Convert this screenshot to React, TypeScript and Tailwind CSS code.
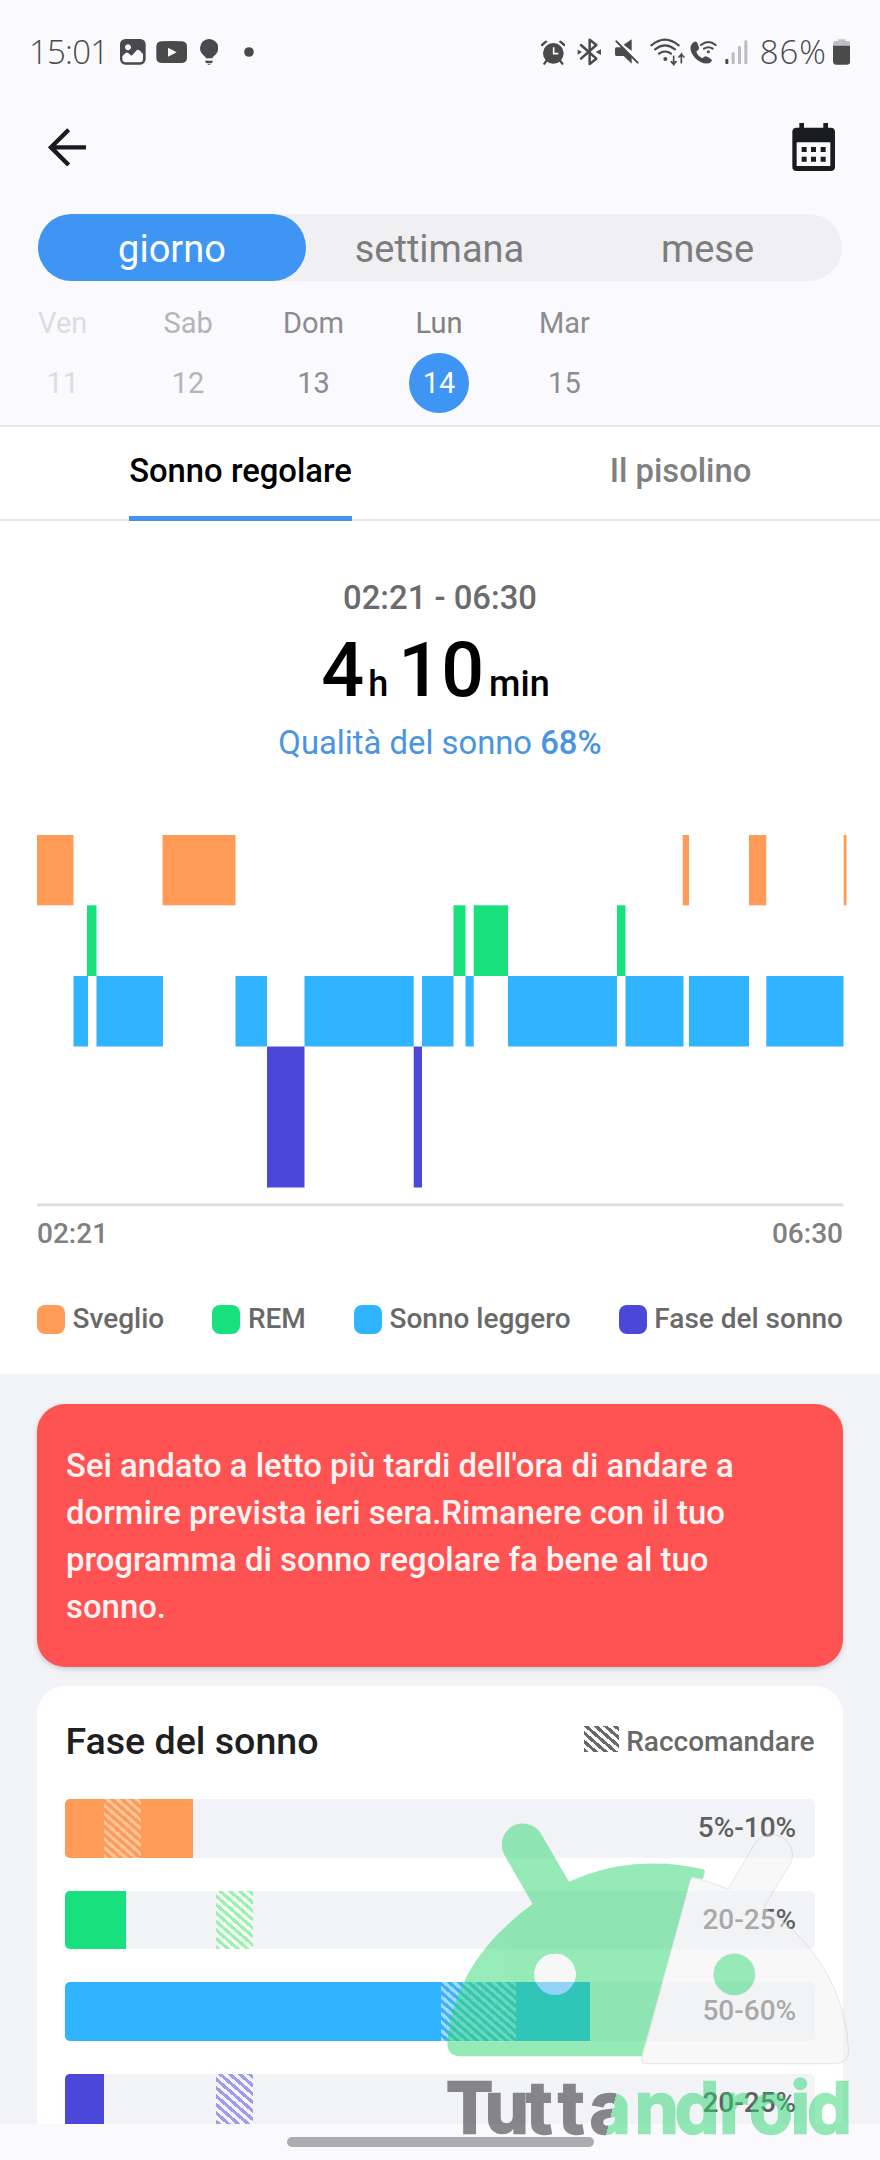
import type { ReactNode } from "react";

type Stage = "awake" | "rem" | "light" | "deep";

const STAGE_COLOR: Record<Stage, string> = {
  awake: "#ff9b57",
  rem: "#18e07c",
  light: "#31b4ff",
  deep: "#4b48d9",
};

const STAGE_ROW: Record<Stage, { y: number; height: number }> = {
  awake: { y: 0, height: 70.3 },
  rem: { y: 70.3, height: 70.7 },
  light: { y: 141, height: 70.5 },
  deep: { y: 211.5, height: 141 },
};

// [stage, start, end] in chart units
const SEGMENTS: [Stage, number, number][] = [
  ["awake", 0, 36.5],
  ["light", 36.5, 51],
  ["rem", 50, 59.5],
  ["light", 59.5, 126],
  ["awake", 125.5, 198.5],
  ["light", 198.5, 230],
  ["deep", 230, 267.5],
  ["light", 267.5, 376.7],
  ["deep", 376.7, 385],
  ["light", 385, 416.5],
  ["rem", 416.5, 428.5],
  ["light", 428.5, 436.7],
  ["rem", 436.7, 471],
  ["light", 471, 580],
  ["rem", 580, 588.5],
  ["light", 588.5, 646.5],
  ["awake", 645.7, 652],
  ["light", 652, 712],
  ["awake", 712, 729.3],
  ["light", 729.3, 806.5],
  ["awake", 806.7, 809.5],
];

const DAYS = [
  { name: "Ven", num: 11, text: "text-[#dcdce0]" },
  { name: "Sab", num: 12, text: "text-[#b4b4b8]" },
  { name: "Dom", num: 13, text: "text-[#8c8c90]" },
  { name: "Lun", num: 14, text: "text-[#808084]", active: true },
  { name: "Mar", num: 15, text: "text-[#8c8c90]" },
];

const LEGEND = [
  { label: "Sveglio", color: "bg-[#ff9b57]" },
  { label: "REM", color: "bg-[#18e07c]" },
  { label: "Sonno leggero", color: "bg-[#31b4ff]" },
  { label: "Fase del sonno", color: "bg-[#4b48d9]" },
];

const PHASES = [
  {
    range: "5%-10%",
    value: 127.5,
    from: 38.7,
    to: 76,
    fill: "bg-[#ff9b57]",
    hatch: "bg-[repeating-linear-gradient(41deg,#ffc496_0_3.2px,#fb9b5c_3.2px_6.4px)]",
  },
  {
    range: "20-25%",
    value: 60.5,
    from: 150.3,
    to: 188,
    fill: "bg-[#18e07c]",
    hatch: "bg-[repeating-linear-gradient(41deg,#9cf0b0_0_3.2px,#f4fdf6_3.2px_6.4px)]",
  },
  {
    range: "50-60%",
    value: 525,
    from: 376,
    to: 451,
    fill: "bg-[#31b4ff]",
    hatch: "bg-[repeating-linear-gradient(41deg,#9edaff_0_3.2px,#3eb2f6_3.2px_6.4px)]",
  },
  {
    range: "20-25%",
    value: 38.7,
    from: 150.3,
    to: 188,
    fill: "bg-[#4b48d9]",
    hatch: "bg-[repeating-linear-gradient(41deg,#a09bea_0_3.2px,#f4f5fe_3.2px_6.4px)]",
  },
];

interface GlyphProps {
  box: [number, number, number, number];
  className?: string;
  children: ReactNode;
}

// Icons are drawn on a 3x grid
function Glyph({ box, className, children }: GlyphProps) {
  return (
    <svg
      viewBox={box.join(" ")}
      width={box[2] / 3}
      height={box[3] / 3}
      className={`shrink-0 ${className ?? ""}`}
      fill="currentColor"
    >
      {children}
    </svg>
  );
}

function StatusBar() {
  return (
    <div className="flex h-[104px] items-center justify-between pl-[29px] pr-[30px] font-['Open_Sans',sans-serif] text-[#4a4a4a]">
      <div className="flex items-center">
        <span className="w-[76px] whitespace-nowrap text-[33px] font-[360] tracking-[-0.8px]">15:01</span>
        <Glyph box={[360, 117, 77, 77]} className="ml-[15px]">
          <path
            fillRule="evenodd"
            d="M376 117h45a16 16 0 0 1 16 16v45a16 16 0 0 1-16 16h-45a16 16 0 0 1-16-16v-45a16 16 0 0 1 16-16zM367 177a10 10 0 0 0 10 10h42a10 10 0 0 0 10-10v-15l-11-11q-4-3-8 0l-15 16-11-8q-4-3-8 1l-9 9zM384 133a9 9 0 1 0 .1 0z"
          />
        </Glyph>
        <Glyph box={[466, 122, 94, 67]} className="ml-[10px]">
          <path
            fillRule="evenodd"
            d="M482 123q31-2 62 0 15 1 15 16v33q0 15-15 16-31 2-62 0-15-1-15-16v-33q0-15 15-16zM502 142v27l26-13.500z"
          />
        </Glyph>
        <Glyph box={[600, 116, 55, 78]} className="ml-[13px]">
          <path d="M628 116a27 27 0 0 1 27 27c0 12-7 19-14 25q-3 3-4 6h-19q-1-3-4-6c-7-6-14-13-14-25a27 27 0 0 1 28-27zM615 181h24l-3 7h-18zM620 190h14l-7 4z" />
        </Glyph>
        <Glyph box={[733, 141, 30, 30]} className="ml-[26px]">
          <circle cx="748" cy="156" r="14.500" />
        </Glyph>
      </div>

      <div className="flex items-center">
        {/* Alarm */}
        <Glyph box={[303, 117, 73, 75]}>
          <circle cx="340" cy="157" r="31" />
          <path d="M306 132l12-10M373 132l-12-10M313 188l6-8M367 188l-6-8" stroke="currentColor" strokeWidth="7" strokeLinecap="round" />
          <path d="M341 139v19h14" fill="none" stroke="#f9f9fe" strokeWidth="5" />
        </Glyph>
        {/* Bluetooth */}
        <Glyph box={[412, 112, 73, 82]} className="ml-[12px]">
          <path d="M424 133l46 41-20 16v-73l20 16-46 41" fill="none" stroke="currentColor" strokeWidth="7.500" strokeLinejoin="round" strokeLinecap="round" />
          <path d="M414 147l13 7-13 8zM484 146l-16 8 16 9z" />
        </Glyph>
        {/* Muted speaker */}
        <Glyph box={[521, 116, 75, 76]} className="ml-[12px]">
          <path d="M574 117v35l-24-19zM524 146q0-5 5-5h16l29 27v22l-24-23h-21q-5 0-5-5z" />
          <path d="M528 123l64 64" stroke="currentColor" strokeWidth="6" strokeLinecap="round" />
        </Glyph>
        {/* Wi-Fi with traffic arrows */}
        <Glyph box={[630, 112, 107, 84]} className="ml-[11px]">
          <g fill="none" stroke="currentColor" strokeWidth="6.500" strokeLinecap="round">
            <path d="M634 134q41-35 82 0M645 146q30-24 60 0M657 159q18-13 36 0" />
            <path d="M701 167v24l-7-8M701 191l7-8M724 186v-25l-7 8M724 161l8 8" strokeWidth="5" />
          </g>
          <circle cx="676" cy="175" r="6" />
        </Glyph>
        {/* Wi-Fi calling */}
        <Glyph box={[750, 118, 81, 74]} className="ml-[5px]">
          <path d="M762 124q8-4 11 5l4 12q1 5-5 9l-3 3q4 13 18 20l6-5q4-3 9 0l11 7q5 4 0 9-12 9-30 1-20-9-29-30-8-21 8-31z" />
          <path d="M783 133q22-18 44 0M792 144q14-9 26 0" fill="none" stroke="currentColor" strokeWidth="6" strokeLinecap="round" />
          <circle cx="805" cy="153" r="4.500" />
        </Glyph>
        {/* Signal */}
        <Glyph box={[856, 117, 70, 74]} className="ml-[8px]">
          <rect x="857" y="173" width="9" height="17" rx="4.500" />
          <g fill="#bcbcbf">
            <rect x="876" y="154" width="9" height="36" rx="4" />
            <rect x="895" y="135" width="9" height="55" rx="4" />
            <rect x="914" y="118" width="9" height="72" rx="4" />
          </g>
        </Glyph>
        <span className="ml-[11px] w-[69px] whitespace-nowrap text-[33px] font-[360] tracking-[0.9px]">86%</span>
        <Glyph box={[1178, 116, 52, 77]} className="ml-[4px]">
          <path d="M1193 117h23v5h8q6 0 6 8v10h-52v-10q0-8 6-8h9z" fill="#c0c0c3" />
          <path d="M1178 136h52v46q0 11-10 11h-32q-10 0-10-11z" />
        </Glyph>
      </div>
    </div>
  );
}

function Header() {
  return (
    <header className="flex h-[110px] items-center justify-between pl-[48px] pr-[45px] text-[#1a1b20]">
      <button aria-label="Indietro" className="-mt-[24px]">
        <Glyph box={[144, 382, 115, 116]}>
          <path d="M258 440H154M206 387l-53 53 53 53" fill="none" stroke="currentColor" strokeWidth="13" />
        </Glyph>
      </button>
      <button aria-label="Calendario" className="-mt-[24px]">
        <Glyph box={[1055, 368, 130, 145]}>
          <path
            fillRule="evenodd"
            d="M1077 368h14v14h58v-14h14v14h8q13 0 13 13v104q0 13-13 13h-102q-13 0-13-13v-104q0-13 13-13h8zM1069 426v71h101v-71z"
          />
          <path d="M1084 440h15v15h-15zM1112 440h15v15h-15zM1141 440h15v15h-15zM1084 469h15v15h-15zM1112 469h15v15h-15zM1141 469h15v15h-15z" />
        </Glyph>
      </button>
    </header>
  );
}

function PeriodSwitch() {
  return (
    <div className="mx-[38px] grid h-[67px] grid-cols-3 rounded-full bg-[#f0f0f2] text-[38px] text-[#7d7d80]">
      <button className="rounded-full bg-[#3e95f3] pt-[4px] text-white">giorno</button>
      <button className="pr-px pt-[4px]">settimana</button>
      <button className="pr-px pt-[4px]">mese</button>
    </div>
  );
}

function DayPicker() {
  return (
    <div className="grid h-[144px] w-[878px] grid-cols-7 pt-[22px] text-[29px]">
      {DAYS.map((day) => (
        <div key={day.num} className={`flex flex-col items-center ${day.text}`}>
          <span className="leading-[40px]">{day.name}</span>
          <span
            className={`mt-[10px] flex h-[60px] w-[60px] items-center justify-center rounded-full pt-px ${
              day.active ? "bg-[#3e95f3] text-white" : ""
            }`}
          >
            {day.num}
          </span>
        </div>
      ))}
    </div>
  );
}

function Tabs() {
  return (
    <div className="grid h-[96px] grid-cols-2 border-y-[2px] border-[#e6e6e8] text-[32.800px] font-medium">
      <div className="flex justify-center pl-[41px]">
        <button className="h-[94px] border-b-[5px] border-[#4593ee] text-black">Sonno regolare</button>
      </div>
      <div className="flex justify-center pl-[41px]">
        <button className="h-[94px] pb-[5px] text-[#808080]">Il pisolino</button>
      </div>
    </div>
  );
}

function Summary() {
  return (
    <div className="flex h-[314px] flex-col items-center pt-[54px]">
      <p className="text-[32.800px] font-medium leading-[46px] text-[#6b6b6b]">02:21 - 06:30</p>
      <p className="flex h-[98px] items-baseline pr-[9px] text-[75.500px] font-medium leading-[98px] text-black">
        4<span className="ml-[4px] text-[36px]">h</span>
        <span className="ml-[10px]">10</span>
        <span className="ml-[5px] text-[36px]">min</span>
      </p>
      <p className="text-[32.800px] leading-[48px] text-[#4a94e0]">
        Qualità del sonno <span className="font-medium">68%</span>
      </p>
    </div>
  );
}

function SleepChart() {
  return (
    <div className="mx-[37px]">
      <svg viewBox="0 0 810 372" className="block h-[372px] w-[810px]">
        {SEGMENTS.map(([stage, start, end]) => (
          <rect
            key={`${stage}-${start}`}
            x={start}
            y={STAGE_ROW[stage].y}
            width={end - start}
            height={STAGE_ROW[stage].height}
            fill={STAGE_COLOR[stage]}
          />
        ))}
        <rect x="0" y="368.500" width="806.500" height="2.700" fill="#dedede" />
      </svg>
      <div className="flex justify-between text-[28px] font-medium leading-[54px] text-[#808080]">
        <span>02:21</span>
        <span>06:30</span>
      </div>
      <div className="flex h-[113px] items-center justify-between pt-[3px] text-[28px] font-medium text-[#696969]">
        {LEGEND.map((item) => (
          <div key={item.label} className="flex items-center gap-[7.500px] whitespace-nowrap">
            <span className={`h-[29px] w-[28px] rounded-[8px] ${item.color}`} />
            {item.label}
          </div>
        ))}
      </div>
    </div>
  );
}

function Advice() {
  return (
    <div className="h-[263px] rounded-[28px] bg-[#ff5252] px-[29px] pt-[38px] text-[32.900px] font-medium leading-[47px] text-[#fff3f2] shadow-[0_2px_5px_rgba(0,0,0,0.18)]">
      Sei andato a letto più tardi dell'ora di andare a dormire prevista ieri sera.Rimanere con il tuo programma di
      sonno regolare fa bene al tuo sonno.
    </div>
  );
}

function PhaseCard() {
  return (
    <div className="mt-[19px] rounded-t-[28px] bg-white px-[28.400px] pb-[40px]">
      <div className="flex h-[113px] items-center justify-between pb-[2px]">
        <h2 className="text-[37.600px] font-medium text-[#1f1f1f]">Fase del sonno</h2>
        <div className="flex items-center gap-[7px] text-[28px] font-medium text-[#696969]">
          <span className="mb-[6px] h-[26px] w-[35px] bg-[repeating-linear-gradient(41deg,#696969_0_3.200px,#ffffff_3.200px_6.400px)]" />
          Raccomandare
        </div>
      </div>
      <div className="flex flex-col gap-[33px]">
        {PHASES.map((phase, i) => (
          <div
            key={i}
            className="relative flex h-[58.600px] items-center justify-end overflow-hidden rounded-[5px] bg-[#f2f3f7] pr-[18.400px] text-[28px] font-medium text-[#5f5f5f]"
          >
            <div className={`absolute inset-y-0 left-0 ${phase.fill}`} style={{ width: phase.value }} />
            <div
              className={`absolute inset-y-0 ${phase.hatch}`}
              style={{ left: phase.from, width: phase.to - phase.from }}
            />
            <span className="relative">{phase.range}</span>
          </div>
        ))}
      </div>
    </div>
  );
}

function Watermark() {
  return (
    <svg viewBox="0 0 1380 1140" className="pointer-events-none absolute bottom-0 right-0 h-[380px] w-[460px]">
      <defs>
        <linearGradient id="wordmark" gradientUnits="userSpaceOnUse" x1="555" y1="1000" x2="591" y2="1009">
          <stop offset="0.5" stopColor="#1a1a1a" />
          <stop offset="0.5" stopColor="#2fd771" />
        </linearGradient>
      </defs>
      <g opacity="0.5">
        <path
          fillRule="evenodd"
          fill="#2fd771"
          d="M118 829Q82 826 82 790Q100 545 338 372L255 228A62 62 0 0 1 362 160L447 305A624 624 0 0 1 846 267Q857 270 854 278L848 298L819 292Q813 292 811 300L665 829ZM405 521a62 62 0 1 0 .1 0z"
        />
        <circle cx="405" cy="583" r="62" fill="#f0f0f0" />
        <path
          fillRule="evenodd"
          fill="#f3f3f3"
          stroke="#8a8a8a"
          strokeWidth="1.200"
          d="M665 838L811 300Q813 291 822 293Q875 305 924 328L1005 190A62 62 0 0 1 1115 244L1032 380Q1275 550 1286 815Q1284 847 1250 851L672 851Q663 849 665 838ZM943 521a62 62 0 1 0 .1 0z"
        />
        <circle cx="943" cy="583" r="62" fill="#2fd771" />
        <text
          y="1058"
          x="78 194 319 415 509 644 764 898 988 1112 1162"
          className="font-['Inter',sans-serif] text-[212px] font-bold"
          fill="url(#wordmark)"
          stroke="url(#wordmark)"
          strokeWidth="7"
        >
          Tuttandroid
        </text>
      </g>
    </svg>
  );
}

export default function App() {
  return (
    <div className="relative flex h-[2160px] w-[880px] flex-col overflow-hidden bg-[#f9f9fe] font-['Roboto',sans-serif]">
      <StatusBar />
      <Header />
      <PeriodSwitch />
      <DayPicker />
      <main className="flex h-[1699px] flex-col overflow-hidden bg-white">
        <Tabs />
        <Summary />
        <SleepChart />
        <section className="min-h-0 flex-1 bg-[#f1f3f7] px-[37px] pt-[30px]">
          <Advice />
          <PhaseCard />
        </section>
      </main>
      <div className="flex flex-1 justify-center pt-[13px]">
        <div className="h-[10px] w-[307px] rounded-full bg-[#acacae]" />
      </div>
      <Watermark />
    </div>
  );
}
